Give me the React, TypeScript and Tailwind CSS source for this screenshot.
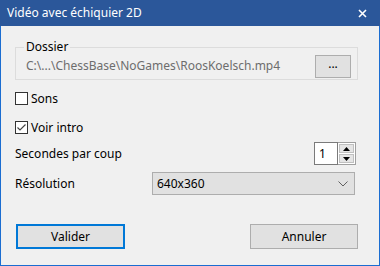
import { useState } from "react";

function Checkbox({ checked, label }: { checked: boolean; label: string }) {
    return (
        <div className="flex flex-row items-center h-[13px]">
            <div className="w-[13px] h-[13px] border border-[#333333] bg-white flex items-center justify-center">
                {checked && (
                    <svg width="11" height="11" viewBox="0 0 11 11">
                        <path d="M1.5 5.5 L4 8 L9.5 2.5" stroke="#444" strokeWidth="1.2" fill="none" />
                    </svg>
                )}
            </div>
            <span className="ml-[3px] text-black">{label}</span>
        </div>
    )
}

export default function App() {
    const [seconds] = useState(1)

    return (
        <div className="w-[380px] h-[266px] flex flex-col font-['Noto_Sans',sans-serif] text-[12px] leading-none">
            {/* title bar */}
            <div className="h-[26px] bg-[#2b579a] flex flex-row items-center justify-between pl-[7px] pr-[13px] shrink-0">
                <span className="text-white text-[12px]">Vidéo avec échiquier 2D</span>
                <svg width="9" height="9" viewBox="0 0 9 9">
                    <path d="M1 1 L8 8 M8 1 L1 8" stroke="white" strokeWidth="1.6" />
                </svg>
            </div>

            <div className="flex-1 bg-[#f0f0f0] border-x border-b border-[#1b6dd1] pl-[14px] flex flex-col">
                {/* Dossier group */}
                <div className="relative mt-[21px] w-[343px] h-[33px] border border-[#dcdcdc] flex flex-row items-center pl-[10px] pr-[6px]">
                    <span className="absolute left-[8px] top-[-7px] bg-[#f0f0f0] px-[2px] text-black">Dossier</span>
                    <span className="flex-1 text-[#6d6d6d] pt-[5px]">C:\...\ChessBase\NoGames\RoosKoelsch.mp4</span>
                    <button className="w-[36px] h-[23px] mt-[5px] border border-[#adadad] bg-[#e1e1e1] text-black flex items-center justify-center pb-[4px]">...</button>
                </div>

                <div className="mt-[12px]">
                    <Checkbox checked={false} label="Sons" />
                </div>
                <div className="mt-[16px]">
                    <Checkbox checked={true} label="Voir intro" />
                </div>

                {/* seconds */}
                <div className="mt-[8px] h-[23px] w-[341px] flex flex-row items-center justify-between">
                    <span className="text-black">Secondes par coup</span>
                    <div className="flex flex-row h-[23px]">
                        <div className="w-[24px] h-[23px] border border-[#7a7a7a] bg-white flex items-center pl-[4px] text-black">{seconds}</div>
                        <div className="flex flex-col w-[18px] h-[23px] border border-[#a0a0a0] border-l-0 bg-white">
                            <div className="flex-1 m-[1px] mb-0 bg-[#e5e5e5] border border-[#c0c0c0] flex items-center justify-center">
                                <svg width="7" height="4" viewBox="0 0 7 4"><path d="M0 4 L3.5 0 L7 4 Z" fill="black" /></svg>
                            </div>
                            <div className="flex-1 m-[1px] bg-[#e5e5e5] border border-[#c0c0c0] flex items-center justify-center">
                                <svg width="7" height="4" viewBox="0 0 7 4"><path d="M0 0 L3.5 4 L7 0 Z" fill="black" /></svg>
                            </div>
                        </div>
                    </div>
                </div>

                {/* resolution */}
                <div className="mt-[7px] h-[23px] flex flex-row items-center">
                    <span className="w-[137px] text-black">Résolution</span>
                    <div className="w-[203px] h-[23px] border border-[#adadad] bg-[#e1e1e1] flex flex-row items-center justify-between pl-[4px] pr-[6px]">
                        <span className="text-black">640x360</span>
                        <svg width="10" height="6" viewBox="0 0 10 6"><path d="M0.5 0.5 L5 5 L9.5 0.5" stroke="#606060" strokeWidth="1" fill="none" /></svg>
                    </div>
                </div>

                {/* buttons */}
                <div className="mt-[29px] w-[343px] flex flex-row justify-between">
                    <button className="ml-[1px] w-[109px] h-[25px] border-2 border-[#0078d7] bg-[#e1e1e1] text-black flex items-center justify-center">Valider</button>
                    <button className="w-[108px] h-[25px] border border-[#adadad] bg-[#e1e1e1] text-black flex items-center justify-center">Annuler</button>
                </div>
            </div>
        </div>
    )
}
